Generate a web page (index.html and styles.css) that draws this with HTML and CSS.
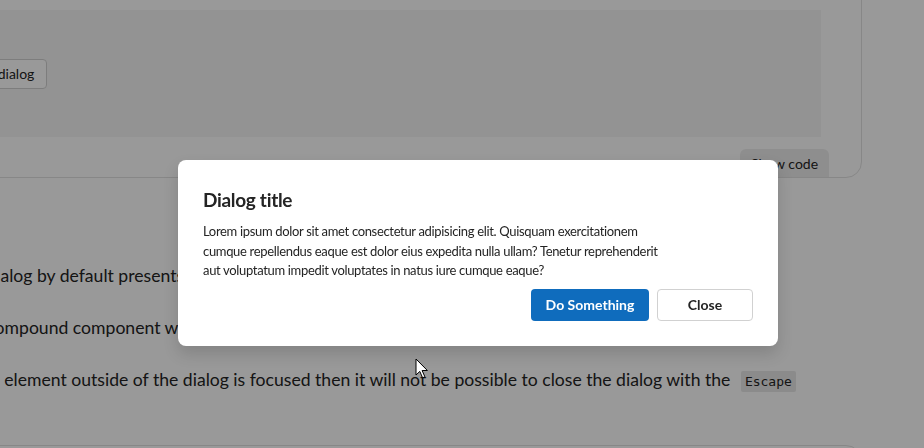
FILE: index.html
```html
<!DOCTYPE html>
<html lang="en">
<head>
<meta charset="utf-8">
<title>Dialog</title>
<link rel="stylesheet" href="styles.css">
</head>
<body>
<div class="page">
  <section class="demo-card">
    <div class="preview">
      <button class="btn-outline">Open dialog</button>
    </div>
    <div class="demo-footer">
      <button class="btn-code">Show code</button>
    </div>
  </section>
  <div class="content">
    <p>Dialog by default presents a modal dialog that traps focus and blocks interaction with the page.</p>
    <p>Compound component with a title, body and actions.</p>
    <p class="note">An element outside of the dialog is focused then it will not be possible to close the dialog with the <code>Escape</code></p>
  </div>
  <section class="demo-card demo-card-next"></section>
</div>

<div class="backdrop"></div>
<div class="dialog" role="dialog" aria-labelledby="dlg-title">
  <h2 id="dlg-title" class="dialog-title">Dialog title</h2>
  <p class="dialog-body">Lorem ipsum dolor sit amet consectetur adipisicing elit. Quisquam exercitationem<br>cumque repellendus eaque est dolor eius expedita nulla ullam? Tenetur reprehenderit<br>aut voluptatum impedit voluptates in natus iure cumque eaque?</p>
  <div class="dialog-actions">
    <button class="btn-primary">Do Something</button>
    <button class="btn-secondary">Close</button>
  </div>
</div>

<svg class="cursor" width="14" height="22" viewBox="0 0 14 22" aria-hidden="true">
  <path d="M1 1 L1 17 L4.8 13.4 L7.6 19.8 L9.9 18.8 L7.1 12.5 L12.4 12.5 Z" fill="#fff" stroke="#000" stroke-width="1" stroke-linejoin="miter"/>
</svg>
</body>
</html>
```

FILE: styles.css
```css
* { box-sizing: border-box; }

html, body {
  margin: 0;
  width: 924px;
  height: 448px;
  overflow: hidden;
  background: #ffffff;
}

body {
  font-family: Lato, "Liberation Sans", sans-serif;
  color: #242424;
  position: relative;
}

.page {
  margin-left: -118px;
  width: 980px;
}

.demo-card {
  margin-top: -21px;
  padding: 30px 40px 0 20px;
  border: 1px solid #e2e2e2;
  border-radius: 16px;
}

.preview {
  height: 127px;
  background: #f6f6f6;
  display: flex;
  align-items: center;
  padding-left: 44px;
}

.btn-outline {
  height: 30px;
  padding: 0 12px;
  font: 14px Lato, sans-serif;
  color: #242424;
  background: #ffffff;
  border: 1px solid #d1d1d1;
  border-radius: 4px;
}

.demo-footer {
  display: flex;
  justify-content: flex-end;
  margin-top: 12px;
  margin-right: -8px;
}

.btn-code {
  width: 89px;
  height: 28px;
  border: 0;
  border-radius: 6px 6px 0 0;
  background: #ededed;
  font: 14px Lato, sans-serif;
  color: #242424;
}

.content {
  padding: 84px 0 0 101px;
}

.content p {
  margin: 0 0 24px;
  font-size: 17.6px;
  line-height: 28px;
  white-space: nowrap;
}

.content .note {
  text-indent: -5px;
}

.content code {
  font-family: "DejaVu Sans Mono", monospace;
  font-size: 13px;
  background: #e8e8e8;
  padding: 3px 4px;
  border-radius: 2px;
  margin-left: 6px;
}

.demo-card-next {
  margin-top: 49px;
  height: 60px;
  padding: 0;
}

.backdrop {
  position: fixed;
  inset: 0;
  background: rgba(0, 0, 0, 0.4);
}

.dialog {
  position: absolute;
  left: 178px;
  top: 160px;
  width: 600px;
  padding: 26px 25px 25px;
  background: #ffffff;
  border-radius: 8px;
  box-shadow: 0 8px 16px rgba(0, 0, 0, 0.14);
}

.dialog-title {
  margin: 0 0 8px;
  font-size: 19px;
  letter-spacing: -0.3px;
  line-height: 28px;
  font-weight: 700;
  color: #242424;
}

.dialog-body {
  margin: 0;
  font-size: 13px;
  letter-spacing: -0.33px;
  line-height: 19.5px;
  color: #242424;
}

.dialog-actions {
  display: flex;
  justify-content: flex-end;
  gap: 8px;
  margin-top: 8px;
}

.btn-primary,
.btn-secondary {
  height: 32px;
  border-radius: 4px;
  font: 700 14px Lato, sans-serif;
}

.btn-primary {
  width: 118px;
  background: #0f6cbd;
  color: #ffffff;
  border: 0;
}

.btn-secondary {
  width: 96px;
  background: #ffffff;
  color: #242424;
  border: 1px solid #d1d1d1;
}

.cursor {
  position: absolute;
  left: 415px;
  top: 358px;
}
```
